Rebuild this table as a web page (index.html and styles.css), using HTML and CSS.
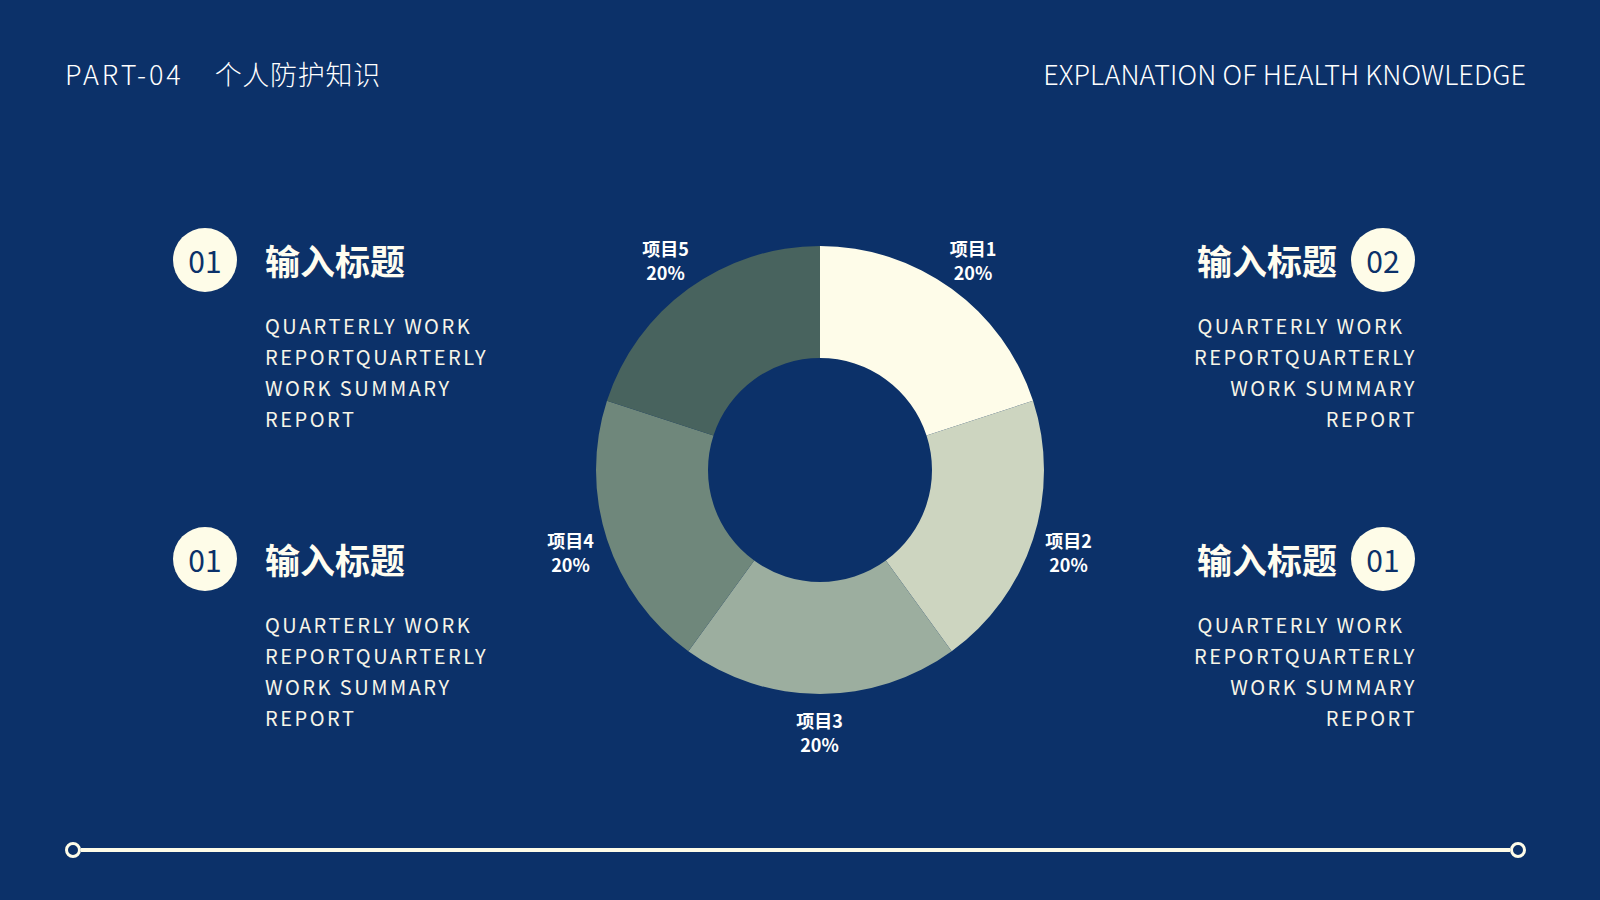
FILE: index.html
```html
<!DOCTYPE html>
<html lang="zh">
<head>
<meta charset="utf-8">
<title>PART-04 个人防护知识</title>
<link rel="stylesheet" href="styles.css">
</head>
<body>
<div class="slide">
  <header class="header">
    <div class="header-left"><span class="part">PART-04</span><span class="part-title">个人防护知识</span></div>
    <div class="header-right">EXPLANATION OF HEALTH KNOWLEDGE</div>
  </header>

  <main class="main">
    <section class="col col-left">
      <div class="item">
        <div class="item-head">
          <div class="num">01</div>
          <h2 class="title">输入标题</h2>
        </div>
        <p class="body">QUARTERLY WORK&ensp;<br>REPORTQUARTERLY<br>WORK SUMMARY<br>REPORT</p>
      </div>
      <div class="item">
        <div class="item-head">
          <div class="num">01</div>
          <h2 class="title">输入标题</h2>
        </div>
        <p class="body">QUARTERLY WORK&ensp;<br>REPORTQUARTERLY<br>WORK SUMMARY<br>REPORT</p>
      </div>
    </section>

    <section class="chart">
      <svg class="donut" viewBox="0 0 600 600" width="600" height="600">
        <path class="s1" d="M300 76 A224 224 0 0 1 513.04 230.78 L406.52 265.39 A112 112 0 0 0 300 188 Z"/>
        <path class="s2" d="M513.04 230.78 A224 224 0 0 1 431.66 481.22 L365.83 390.61 A112 112 0 0 0 406.52 265.39 Z"/>
        <path class="s3" d="M431.66 481.22 A224 224 0 0 1 168.34 481.22 L234.17 390.61 A112 112 0 0 0 365.83 390.61 Z"/>
        <path class="s4" d="M168.34 481.22 A224 224 0 0 1 86.96 230.78 L193.48 265.39 A112 112 0 0 0 234.17 390.61 Z"/>
        <path class="s5" d="M86.96 230.78 A224 224 0 0 1 300 76 L300 188 A112 112 0 0 0 193.48 265.39 Z"/>
      </svg>
      <div class="lbl lbl-1">项目1<br>20%</div>
      <div class="lbl lbl-2">项目2<br>20%</div>
      <div class="lbl lbl-3">项目3<br>20%</div>
      <div class="lbl lbl-4">项目4<br>20%</div>
      <div class="lbl lbl-5">项目5<br>20%</div>
    </section>

    <section class="col col-right">
      <div class="item">
        <div class="item-head">
          <h2 class="title">输入标题</h2>
          <div class="num">02</div>
        </div>
        <p class="body">QUARTERLY WORK&ensp;<br>REPORTQUARTERLY<br>WORK SUMMARY<br>REPORT</p>
      </div>
      <div class="item">
        <div class="item-head">
          <h2 class="title">输入标题</h2>
          <div class="num">01</div>
        </div>
        <p class="body">QUARTERLY WORK&ensp;<br>REPORTQUARTERLY<br>WORK SUMMARY<br>REPORT</p>
      </div>
    </section>
  </main>

  <footer class="footer">
    <span class="dot"></span>
    <span class="rule"></span>
    <span class="dot"></span>
  </footer>
</div>
</body>
</html>
```

FILE: styles.css
```css
* { box-sizing: border-box; }

html, body {
  margin: 0;
  padding: 0;
  background: #0c3169;
}

body {
  font-family: "Noto Sans CJK SC", "Noto Sans", sans-serif;
  color: #fffdf0;
}

.slide {
  width: 1600px;
  height: 900px;
  overflow: hidden;
  background: #0c3169;
}

/* header */
.header {
  display: flex;
  justify-content: space-between;
  align-items: flex-start;
  padding: 56px 74px 0 65px;
  height: 92px;
  font-size: 27px;
  line-height: 36px;
  font-weight: 300;
  color: #ffffff;
}

.header-left {
  display: flex;
  gap: 31px;
}

.part {
  letter-spacing: 2.9px;
}

.part-title {
  letter-spacing: 0.7px;
}

.header-right {
  letter-spacing: 0.1px;
}

/* main */
.main {
  display: grid;
  grid-template-columns: 346.5px 600px 1fr;
  padding: 0 185px 0 173px;
  margin-top: 78px;
  height: 600px;
}

.col {
  display: flex;
  flex-direction: column;
  gap: 93px;
  padding-top: 58px;
}

.col-right {
  align-items: flex-end;
}

.item {
  display: flex;
  flex-direction: column;
}

.col-right .item {
  align-items: flex-end;
}

.item-head {
  display: flex;
  align-items: center;
  gap: 28px;
  height: 64px;
}

.col-right .item-head {
  gap: 14px;
}

.num {
  width: 64px;
  height: 64px;
  border-radius: 50%;
  background: #fefce8;
  color: #0c3169;
  font-size: 30px;
  font-weight: 400;
  line-height: 64px;
  text-align: center;
  flex: none;
}

.title {
  margin: 0;
  font-size: 35px;
  font-weight: 700;
  line-height: 40px;
  color: #fffdf0;
  letter-spacing: 0;
}

.body {
  margin: 18px 0 0 92px;
  font-size: 20px;
  line-height: 31px;
  letter-spacing: 2.5px;
  font-weight: 400;
  color: #f7f5e8;
}

.col-right .body {
  margin: 18px -2px 0 0;
  text-align: right;
}

/* chart */
.chart {
  position: relative;
  width: 600px;
  height: 600px;
}

.donut {
  display: block;
}

.s1 { fill: #fefce9; }
.s2 { fill: #cdd5c0; }
.s3 { fill: #9cae9f; }
.s4 { fill: #6f877b; }
.s5 { fill: #48635e; }

.lbl {
  position: absolute;
  transform: translate(-50%, -50%);
  text-align: center;
  font-size: 18px;
  font-weight: 700;
  line-height: 24px;
  color: #ffffff;
  white-space: nowrap;
}

.lbl-1 { left: 453.5px; top: 90px; }
.lbl-2 { left: 549px; top: 382px; }
.lbl-3 { left: 300px; top: 562px; }
.lbl-4 { left: 51px; top: 382px; }
.lbl-5 { left: 146px; top: 90px; }

/* footer */
.footer {
  display: flex;
  align-items: center;
  padding: 0 74px 0 65px;
  margin-top: 72px;
  height: 16px;
}

.dot {
  width: 16px;
  height: 16px;
  border: 3px solid #fefce8;
  border-radius: 50%;
  flex: none;
}

.rule {
  flex: 1;
  height: 4px;
  background: #fefce8;
}
```
